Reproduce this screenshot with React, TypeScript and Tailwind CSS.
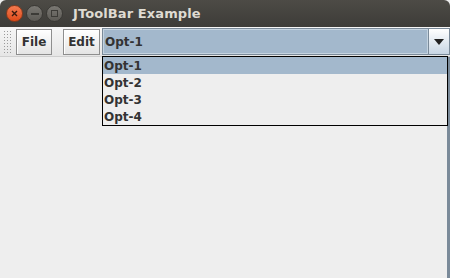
import React from 'react';

const options = ['Opt-1', 'Opt-2', 'Opt-3', 'Opt-4'];

const TitleButton: React.FC<{ kind: 'close' | 'min' | 'max' }> = ({ kind }) => {
  if (kind === 'close') {
    return (
      <div className="w-[17px] h-[17px] rounded-full bg-gradient-to-b from-[#f37a4f] to-[#df4a16] border border-[#8a3a1c] flex items-center justify-center">
        <svg width="7" height="7" viewBox="0 0 7 7">
          <path d="M1 1 L6 6 M6 1 L1 6" stroke="#3a1a0e" strokeWidth="1.4" />
        </svg>
      </div>
    );
  }
  return (
    <div className="w-[17px] h-[17px] rounded-full bg-gradient-to-b from-[#7a7873] to-[#5c5a55] border border-[#3a3935] flex items-center justify-center">
      {kind === 'min' ? (
        <div className="w-[8px] h-[2px] bg-[#3c3b37]" />
      ) : (
        <div className="w-[7px] h-[7px] border-[1.5px] border-[#3c3b37]" />
      )}
    </div>
  );
};

const App: React.FC = () => {
  return (
    <div
      className="w-[450px] h-[278px] flex flex-col bg-[#eeeeee] overflow-hidden"
      style={{ fontFamily: '"DejaVu Sans", sans-serif' }}
    >
      {/* Title bar */}
      <div className="h-[27px] shrink-0 flex items-center bg-gradient-to-b from-[#4d4b46] to-[#3d3c38] rounded-t-[6px] pl-[6px]">
        <div className="flex items-center gap-[3px]">
          <TitleButton kind="close" />
          <TitleButton kind="min" />
          <TitleButton kind="max" />
        </div>
        <span className="ml-[10px] text-[#dfdbd2] text-[13px] font-bold tracking-[0.1px]">JToolBar Example</span>
      </div>

      {/* Toolbar */}
      <div className="h-[30px] shrink-0 flex items-center bg-gradient-to-b from-[#f6f6f6] to-[#e6e6e6] border-b border-[#cfcfcf] relative">
        <div
          className="ml-[3px] w-[8px] h-[24px]"
          style={{
            backgroundImage: 'radial-gradient(#9a9a9a 0.6px, transparent 0.8px)',
            backgroundSize: '3px 3px',
          }}
        />
        <button className="ml-[5px] w-[36px] h-[26px] flex items-center justify-center border border-[#8e8e8e] bg-gradient-to-b from-[#ffffff] to-[#e4e4e4] text-[12px] font-bold text-[#333333] shadow-[inset_1px_1px_0_#ffffff]">
          File
        </button>
        <button className="ml-[11px] w-[37px] h-[26px] flex items-center justify-center border border-[#8e8e8e] bg-gradient-to-b from-[#ffffff] to-[#e4e4e4] text-[12px] font-bold text-[#333333] shadow-[inset_1px_1px_0_#ffffff]">
          Edit
        </button>
        <div className="ml-[2px] flex-1 h-[27px] flex border border-[#7a8a99] bg-[#a3b8cc]">
          <div className="flex-1 flex items-center pl-[1px] border border-[#c4d3e0] text-[12px] font-bold text-[#333333]">
            Opt-1
          </div>
          <div className="w-[21px] flex items-center justify-center border-l border-[#7a8a99] bg-gradient-to-b from-[#ffffff] to-[#c8d6e4]">
            <svg width="10" height="6" viewBox="0 0 10 6">
              <path d="M0 0 H10 L5 6 Z" fill="#222222" />
            </svg>
          </div>
        </div>

        {/* Dropdown list */}
        <div className="absolute left-[102px] top-[29px] w-[346px] border border-black bg-[#eeeeee] z-10">
          {options.map((opt, i) => (
            <div
              key={opt}
              className={`h-[17px] flex items-center pl-[1px] text-[12px] font-bold text-[#333333] ${
                i === 0 ? 'bg-[#a3b8cc]' : ''
              }`}
            >
              {opt}
            </div>
          ))}
        </div>
      </div>

      {/* Content */}
      <div className="flex-1 flex">
        <div className="flex-1" />
        <div className="w-[3px] bg-[#7a8a99]" />
      </div>
    </div>
  );
};

export default App;
